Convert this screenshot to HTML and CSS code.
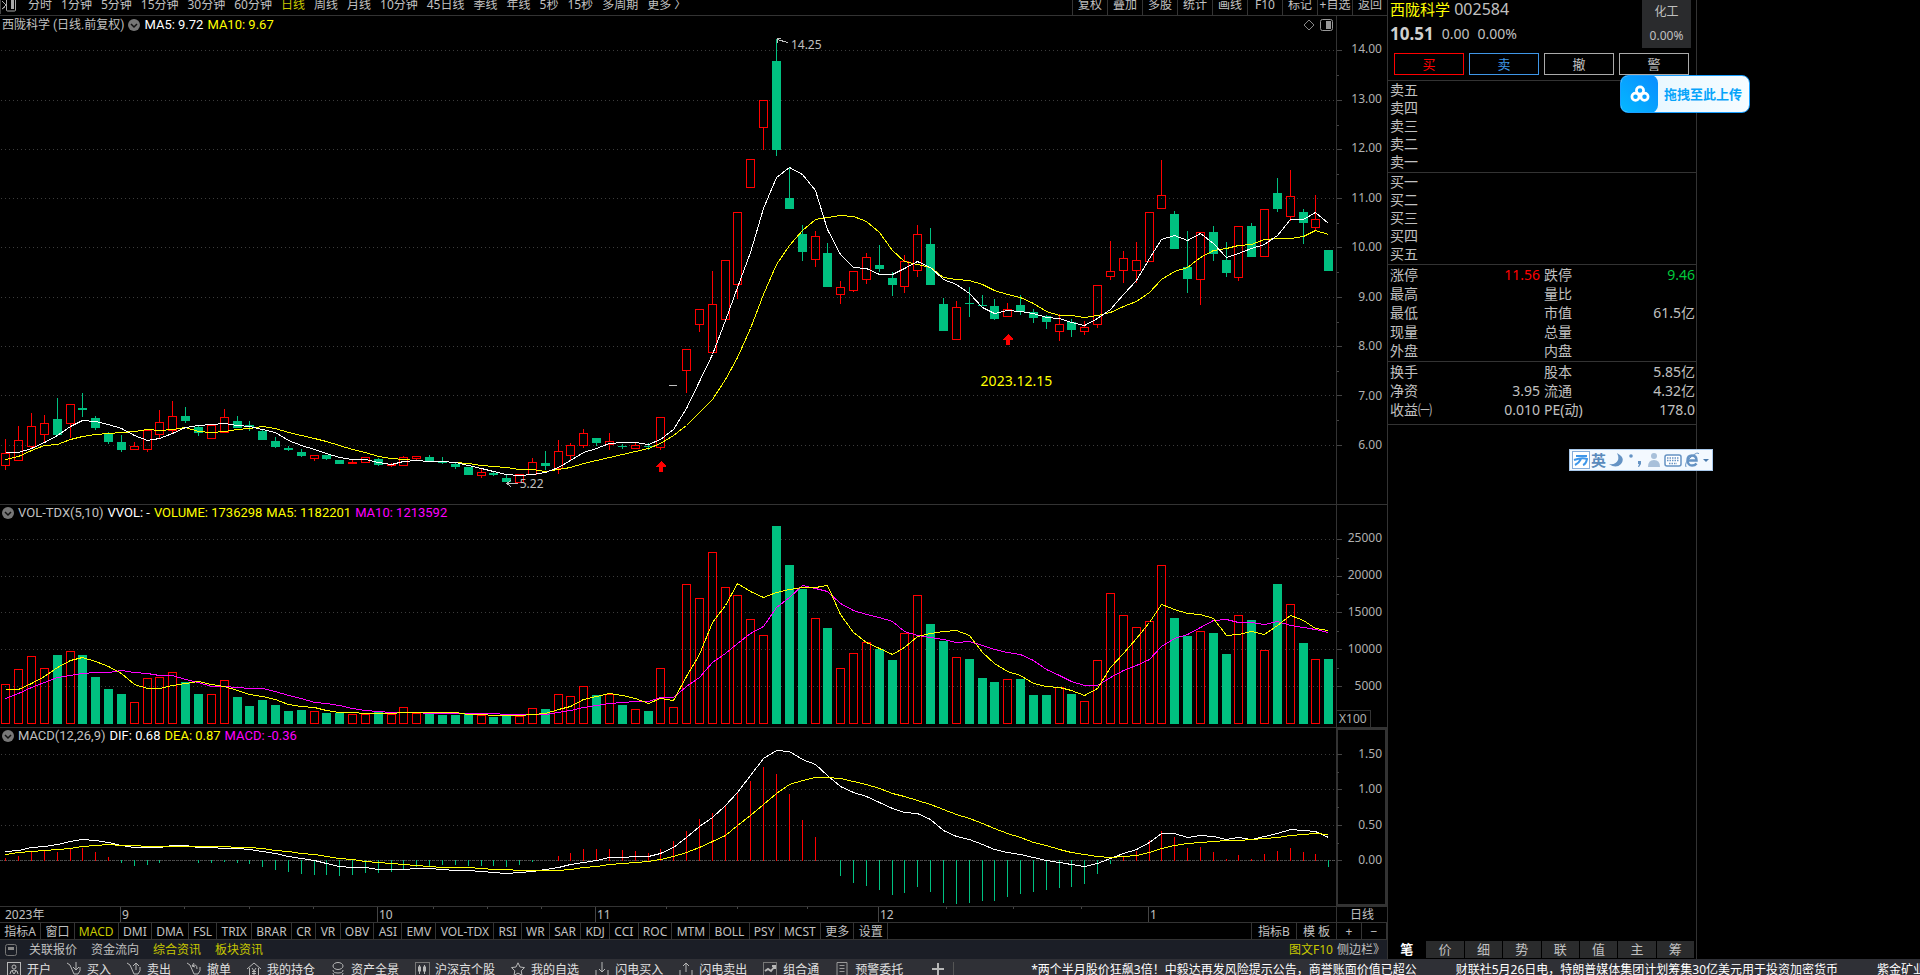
FILE: index.html
```html
<!DOCTYPE html>
<html lang="zh-CN">
<head>
<meta charset="utf-8">
<title>西陇科学 002584</title>
<link rel="stylesheet" href="styles.css">
</head>
<body>
<div class="app">
  <div class="workspace">
    <main class="chart-area">
      <nav class="topbar">
        <svg class="topbar-icon" viewBox="0 0 18 14"><path d="M0.5 0v14" stroke="#444"/><path d="M2 1l4 4-4 4M2 9l3-2" fill="none" stroke="#aaa"/><rect x="6.500" y="-3" width="9" height="14" rx="1" fill="none" stroke="#aaa"/><rect x="11" y="0" width="3" height="9" fill="#aaa"/></svg>
        <div class="periods">
          <button>分时</button><button>1分钟</button><button>5分钟</button><button>15分钟</button><button>30分钟</button><button>60分钟</button><button class="active">日线</button><button>周线</button><button>月线</button><button>10分钟</button><button>45日线</button><button>季线</button><button>年线</button><button>5秒</button><button>15秒</button><button>多周期</button><button>更多 〉</button>
        </div>
        <div class="tools">
          <button>复权</button><button>叠加</button><button>多股</button><button>统计</button><button>画线</button><button>F10</button><button>标记</button><button>+自选</button><button>返回</button>
        </div>
      </nav>

      <section class="panel panel-price">
        <div class="plot">
          <svg id="price" class="canvas" viewBox="0 16 1336 488" preserveAspectRatio="none"></svg>
          <div class="legend">
            <span class="legend-title">西陇科学 (日线.前复权)</span>
            <svg class="chevron" viewBox="0 0 12 12"><circle cx="6" cy="6" r="6" fill="#777"/><path d="M3 5l3 3 3-3" fill="none" stroke="#111" stroke-width="1.500"/></svg>
            <span class="white">MA5: 9.72</span><span class="yellow">MA10: 9.67</span>
            <svg class="corner-icons" viewBox="0 0 32 14"><path d="M2 7l5-5 5 5-5 5z" fill="none" stroke="#888"/><rect x="18.500" y="1.500" width="12" height="11" rx="2" fill="none" stroke="#999"/><rect x="24" y="3" width="5" height="8" fill="#999"/></svg>
          </div>
          <span class="note note-high">14.25</span>
          <span class="note note-low">5.22</span>
          <span class="note note-date">2023.12.15</span>
        </div>
        <div class="axis axis-price"><span>14.00</span><span>13.00</span><span>12.00</span><span>11.00</span><span>10.00</span><span>9.00</span><span>8.00</span><span>7.00</span><span>6.00</span></div>
      </section>

      <section class="panel panel-volume">
        <div class="plot">
          <svg id="volume" class="canvas" viewBox="0 505 1336 222" preserveAspectRatio="none"></svg>
          <div class="legend legend-sub">
            <svg class="chevron" viewBox="0 0 12 12"><circle cx="6" cy="6" r="6" fill="#777"/><path d="M3 5l3 3 3-3" fill="none" stroke="#111" stroke-width="1.500"/></svg>
            <span>VOL-TDX(5,10)</span><span class="white">VVOL: -</span><span class="yellow">VOLUME: 1736298</span><span class="yellow">MA5: 1182201</span><span class="magenta">MA10: 1213592</span>
          </div>
        </div>
        <div class="axis axis-volume"><div class="scale"><span>25000</span><span>20000</span><span>15000</span><span>10000</span><span>5000</span></div><span class="unit">X100</span></div>
      </section>

      <section class="panel panel-macd">
        <div class="plot">
          <svg id="macd" class="canvas" viewBox="0 728 1336 178" preserveAspectRatio="none"></svg>
          <div class="legend legend-sub">
            <svg class="chevron" viewBox="0 0 12 12"><circle cx="6" cy="6" r="6" fill="#777"/><path d="M3 5l3 3 3-3" fill="none" stroke="#111" stroke-width="1.500"/></svg>
            <span>MACD(12,26,9)</span><span class="white">DIF: 0.68</span><span class="yellow">DEA: 0.87</span><span class="magenta">MACD: -0.36</span>
          </div>
        </div>
        <div class="axis axis-macd"><span>1.50</span><span>1.00</span><span>0.50</span><span>0.00</span></div>
      </section>

      <div class="timeline">
        <div class="months">
          <svg id="ticks" class="canvas" viewBox="0 0 1336 15" preserveAspectRatio="none"></svg>
          <div class="month-row"><span>2023年</span><span>9</span><span>10</span><span>11</span><span>12</span><span>1</span></div>
        </div>
        <span class="cycle">日线</span>
      </div>

      <nav class="indicators">
        <div class="indicator-list"><button>指标A</button><button>窗口</button><button class="active">MACD</button><button>DMI</button><button>DMA</button><button>FSL</button><button>TRIX</button><button>BRAR</button><button>CR</button><button>VR</button><button>OBV</button><button>ASI</button><button>EMV</button><button>VOL-TDX</button><button>RSI</button><button>WR</button><button>SAR</button><button>KDJ</button><button>CCI</button><button>ROC</button><button>MTM</button><button>BOLL</button><button>PSY</button><button>MCST</button><button>更多</button><button>设置</button></div>
        <div class="templates"><button>指标B</button><button>模 板</button><button class="zoom">+</button><button class="zoom">−</button></div>
      </nav>

      <nav class="infobar">
        <svg class="info-icon" viewBox="0 0 12 13"><rect x="0.500" y="1.500" width="11" height="11" rx="2" fill="none" stroke="#777"/><rect x="3" y="4" width="6" height="3" fill="#888"/></svg>
        <button>关联报价</button><button>资金流向</button><button class="active">综合资讯</button><button class="active">板块资讯</button>
        <div class="info-right"><button class="active">图文F10</button><button>侧边栏》</button></div>
      </nav>
    </main>

    <aside class="quote">
      <header class="quote-head">
        <div>
          <h1 class="stock"><span class="stock-name">西陇科学</span> 002584</h1>
          <p class="last"><b>10.51</b><span>0.00</span><span>0.00%</span></p>
        </div>
        <div class="sector"><span>化工</span><span>0.00%</span></div>
      </header>
      <div class="orders"><button class="buy">买</button><button class="sell">卖</button><button>撤</button><button>警</button></div>
      <table class="depth"><tbody>
        <tr><th scope="row">卖五</th><td></td></tr><tr><th scope="row">卖四</th><td></td></tr><tr><th scope="row">卖三</th><td></td></tr><tr><th scope="row">卖二</th><td></td></tr><tr><th scope="row">卖一</th><td></td></tr>
      </tbody></table>
      <table class="depth"><tbody>
        <tr><th scope="row">买一</th><td></td></tr><tr><th scope="row">买二</th><td></td></tr><tr><th scope="row">买三</th><td></td></tr><tr><th scope="row">买四</th><td></td></tr><tr><th scope="row">买五</th><td></td></tr>
      </tbody></table>
      <dl class="stats">
        <div><dt>涨停</dt><dd class="up">11.56</dd></div><div><dt>跌停</dt><dd class="down">9.46</dd></div>
        <div><dt>最高</dt><dd></dd></div><div><dt>量比</dt><dd></dd></div>
        <div><dt>最低</dt><dd></dd></div><div><dt>市值</dt><dd>61.5亿</dd></div>
        <div><dt>现量</dt><dd></dd></div><div><dt>总量</dt><dd></dd></div>
        <div><dt>外盘</dt><dd></dd></div><div><dt>内盘</dt><dd></dd></div>
      </dl>
      <dl class="stats stats-last">
        <div><dt>换手</dt><dd></dd></div><div><dt>股本</dt><dd>5.85亿</dd></div>
        <div><dt>净资</dt><dd>3.95</dd></div><div><dt>流通</dt><dd>4.32亿</dd></div>
        <div><dt>收益㈠</dt><dd>0.010</dd></div><div><dt>PE(动)</dt><dd>178.0</dd></div>
      </dl>
      <nav class="side-tabs"><button class="current">笔</button><button>价</button><button>细</button><button>势</button><button>联</button><button>值</button><button>主</button><button>筹</button></nav>
    </aside>
  </div>

  <footer class="footer">
    <button><svg viewBox="0 0 14 14"><rect x=".5" y=".5" width="13" height="16" fill="none"/><circle cx="7" cy="5" r="2"/><path d="M3 12q0-4 4-4t4 4M5 9l2 3 2-3"/></svg>开户</button>
    <button><svg viewBox="0 0 14 14"><path d="M0 1l3 2 4 9h4q3-3 2-7M9 0v7M6 5l3 3 3-3"/></svg>买入</button>
    <button><svg viewBox="0 0 14 14"><path d="M0 1l3 2 4 9h4q3-3 2-7M9 8V1M6 4l3-3 3 3"/></svg>卖出</button>
    <button><svg viewBox="0 0 14 14"><path d="M0 1l3 2 4 9h4q3-3 2-7M7 1l-2 3 3 1M5 4q5-3 5 3"/></svg>撤单</button>
    <button><svg viewBox="0 0 14 14"><path d="M0 7l7-6 7 6M2.500 6v8h9V6M5 6l2 3 2-3M7 9v4M5 9.500h4M5 11.500h4"/></svg>我的持仓</button>
    <button><svg viewBox="0 0 14 14"><ellipse cx="7" cy="4" rx="5" ry="3.500"/><path d="M2 8q0 3 5 3t5-3M2 11q0 3 5 3t5-3"/></svg>资产全景</button>
    <button><svg viewBox="0 0 14 14"><rect x=".5" y=".5" width="14" height="16" stroke="#777"/><path d="M4.500 3v9M9.500 3v9"/><rect x="3.500" y="5" width="2" height="4"/><rect x="8.500" y="5" width="2" height="4"/></svg>沪深京个股</button>
    <button><svg viewBox="0 0 14 14"><path d="M7 .8l2 4.200 4.500.6-3.300 3.200.8 4.500-4-2.200-4 2.200.8-4.500L.5 5.600 5 5z"/></svg>我的自选</button>
    <button><svg viewBox="0 0 14 14"><path d="M7 0v10M4 7l3 3 3-3M1 8v6M13 8v6"/></svg>闪电买入</button>
    <button><svg viewBox="0 0 14 14"><path d="M7 10V1M4 4l3-3 3 3M1 8v6M13 8v6"/></svg>闪电卖出</button>
    <button><svg viewBox="0 0 14 14"><rect x=".5" y=".5" width="13" height="13" stroke="#777"/><path d="M2 9l3-2 3 2 4-5M9 4h3v3" stroke-width="2"/></svg>组合通</button>
    <button><svg viewBox="0 0 14 14"><path d="M2 14V.5h10V14M4.500 3.500h5M4.500 6.500h5M4.500 9.500h5" stroke="#999"/></svg>预警委托</button>
    <button class="add" aria-label="添加"><svg viewBox="0 0 14 14"><path d="M1 7h12M7 1v12" stroke-width="2"/></svg></button>
    <div class="ticker"><a href="#">*两个半月股价狂飙3倍！中毅达再发风险提示公告，商誉账面价值已超公</a><a href="#">财联社5月26日电，特朗普媒体集团计划筹集30亿美元用于投资加密货币</a><a href="#">紫金矿业</a></div>
  </footer>
</div>

<button class="upload"><span class="upload-logo"><svg viewBox="0 0 22 20"><g fill="none" stroke="#fff" stroke-width="3"><circle cx="11" cy="6" r="4"/><circle cx="6" cy="13" r="4"/><circle cx="16" cy="13" r="4"/></g></svg></span><span class="upload-text">拖拽至此上传</span></button>

<div class="ime">
  <svg viewBox="0 0 18 18"><rect x=".5" y=".5" width="17" height="17" fill="#fff" stroke="#86aedb"/><path d="M4 5h11M2 9q8-3 13-1-1 5-4 6M9 8q-2 4-6 6" fill="none" stroke="#3f97ea" stroke-width="2"/></svg>
  <span class="ime-lang">英</span>
  <svg viewBox="0 0 18 18"><path d="M10 2q9 5 4 11-5 5-12 0 7 1 9-4 1-3-1-7z" fill="#6593c4"/></svg>
  <svg viewBox="0 0 18 18"><circle cx="5" cy="5" r="1.800" fill="#6593c4"/><path d="M12 10h3v3l-2 3h-1l1-3h-1z" fill="#6593c4"/></svg>
  <svg viewBox="0 0 18 18"><circle cx="9" cy="5" r="3" fill="#a8c0da"/><path d="M3 16q0-7 6-7t6 7z" fill="#a8c0da"/></svg>
  <svg viewBox="0 0 18 18"><rect x="1" y="4" width="16" height="11" rx="2" fill="#fff" stroke="#6593c4" stroke-width="1.500"/><path d="M3 7h12M3 9.500h12M5 12.500h8" stroke="#6593c4" stroke-width="1.500" stroke-dasharray="1.500 1"/></svg>
  <svg viewBox="0 0 18 18"><path d="M4.500 9.500h9q0-5-4.500-5t-4.500 5q.5 5 4.500 5 3 0 4.500-2" fill="none" stroke="#6593c4" stroke-width="2.500"/><path d="M3 16Q1 12 8 6t8-3" fill="none" stroke="#6593c4"/></svg>
  <svg class="ime-more" viewBox="0 0 8 18"><path d="M1 8h6l-3 3z" fill="#4c7cae"/></svg>
</div>
<script src="chart.js"></script>
</body>
</html>
```
FILE: styles.css
```css
* { box-sizing: border-box; }
body {
  margin: 0;
  background: #000;
  color: #c0c0c0;
  font: 12px/16px "Noto Sans", "Noto Sans CJK SC", sans-serif;
}
button {
  margin: 0; padding: 0; border: 0; background: none;
  color: inherit; font: inherit; white-space: nowrap;
}
h1, p, dl, dd { margin: 0; font-weight: normal; }
svg { display: block; }

.app { display: flex; flex-direction: column; height: 100vh; overflow: hidden; }
.workspace {
  flex: 1 1 0; min-height: 0;
  display: grid; grid-template-columns: minmax(0, 1fr) 310px 223px;
}
.chart-area { display: flex; flex-direction: column; min-width: 0; min-height: 0; }
.white { color: #fff; }
.yellow { color: #ff0; }
.magenta { color: #f0f; }
.active { color: #c8c800; }

.topbar {
  flex: none; display: flex; align-items: flex-start; height: 16px;
  border-bottom: 1px solid #333; overflow: hidden;
}
.topbar button { line-height: 10px; }
.topbar-icon { width: 18px; height: 14px; margin-right: 10px; }
.periods { display: flex; gap: 9px; }
.tools { display: flex; margin-left: auto; }
.tools button { width: 35px; height: 15px; padding-bottom: 5px; border-left: 1px solid #333; }

.panel {
  display: grid; grid-template-columns: minmax(0, 1fr) 51px;
  min-height: 0; border-bottom: 1px solid #333;
}
.panel-price { flex: 488 1 0; }
.panel-volume { flex: 222 1 0; }
.panel-macd { flex: 178 1 0; }
.plot, .months { position: relative; display: grid; grid-template: minmax(0, 1fr) / minmax(0, 1fr); min-height: 0; }
.plot > *, .months > * { grid-area: 1 / 1; }
.canvas { width: 100%; height: 100%; overflow: visible; shape-rendering: crispEdges; }
.legend {
  align-self: start; display: flex; align-items: center; gap: 4px;
  height: 18px; padding-left: 2px; white-space: nowrap;
  font: 13px/16px Roboto, "Noto Sans CJK SC", sans-serif;
}
.legend-sub { height: 16px; }
.legend-title { font-size: 12px; }
.chevron { width: 12px; height: 12px; flex: none; }
.corner-icons { width: 32px; height: 14px; margin-left: auto; margin-right: 2px; }

.note { position: absolute; color: #c0c0c0; }
.note-high { left: 59.200%; top: 21px; }
.note-low { left: 38.900%; top: 460px; }
.note-date { left: 73.400%; top: 356px; color: #ff0; font-size: 14px; line-height: 18px; }

.axis, .scale {
  display: flex; flex-direction: column; justify-content: space-between; align-items: flex-end;
  min-height: 0; color: #b0b0b0;
}
.axis { padding-right: 5px; border-left: 1px solid #333; }
.axis-price { padding-top: 25px; padding-bottom: 51px; }
.axis-volume { padding-top: 25px; }
.scale { flex: 1 1 0; padding-bottom: 16px; }
.unit {
  align-self: flex-start; width: 34px; height: 17px; padding-left: 2px;
  border: solid #333; border-width: 1px 1px 0 0; line-height: 15px;
}
.axis-macd { padding: 16px 3px 36px 0; border: 2px solid #333; }

.timeline { flex: none; display: grid; grid-template-columns: minmax(0, 1fr) 51px; height: 16px; border-bottom: 1px solid #333; line-height: 15px; }
.month-row { display: grid; grid-template-columns: 120fr 257fr 218fr 283fr 270fr 188fr; }
.month-row span { padding-left: 1px; border-left: 1px solid #444; }
.month-row span:first-child { padding-left: 5px; border-left: 0; }
.cycle { border-left: 1px solid #333; text-align: center; }

.indicators { flex: none; display: flex; height: 17px; border-bottom: 1px solid #333; }
.indicators button { padding: 0 4px; border-right: 1px solid #333; line-height: 17px; }
.indicator-list { display: flex; width: 64%; }
.indicator-list button { flex: 1 0 auto; }
.templates { display: flex; margin-left: auto; border-left: 1px solid #333; }
.templates button { padding: 0 6px; }
.templates .zoom { width: 25px; padding: 0; }

.infobar { flex: none; display: flex; align-items: center; gap: 14px; height: 19px; padding: 0 2px 0 5px; background: #1b1e26; }
.info-icon { width: 12px; height: 13px; margin-right: -2px; }
.info-right { display: flex; gap: 4px; margin-left: auto; }

.quote { display: flex; flex-direction: column; border: solid #333; border-width: 0 1px; min-height: 0; }
.quote-head { display: flex; justify-content: space-between; height: 48px; padding: 0 5px 0 2px; }
.stock { font-size: 16px; line-height: 18px; }
.stock-name { color: #ff0; font-size: 15px; }
.last { display: flex; align-items: center; gap: 8px; font-size: 14px; line-height: 20px; margin-top: 6px; }
.last b { font-size: 17px; color: #d0d0d0; }
.sector { width: 49px; background: #2a2b2d; text-align: center; display: grid; line-height: 24px; }
.orders { display: grid; grid-template-columns: repeat(4, 1fr); gap: 5px; padding: 5px 7px 5px 6px; border-bottom: 1px solid #333; }
.orders button { height: 22px; border: 1px solid #aaa; font-size: 13px; line-height: 18px; }
.orders .buy { color: #f00; border-color: #f00; }
.orders .sell { color: #3f97e8; border-color: #3f97e8; }
.depth { width: 100%; border-spacing: 0; padding: 0 0 1px 2px; border-bottom: 1px solid #333; font-size: 14px; }
.depth th { padding: 0; font-weight: normal; text-align: left; line-height: 18px; height: 18px; }
.depth td { padding: 0; }
.stats {
  display: grid; grid-template-columns: 150px minmax(0, 1fr); column-gap: 4px;
  padding: 0 1px 1px 2px; border-bottom: 1px solid #333; font-size: 14px; line-height: 19px;
}
.stats div { display: flex; justify-content: space-between; }
.stats-last { padding-bottom: 5px; }
.up { color: #f00; }
.down { color: #00c83c; }
.side-tabs { display: grid; grid-template-columns: repeat(8, 1fr); gap: 1px; margin-top: auto; padding: 0 2px 1px 0; }
.side-tabs button { height: 17px; background: #2a2b2c; font-size: 13px; line-height: 15px; }
.side-tabs .current { background: none; color: #fff; font-weight: bold; }

.footer { flex: none; display: flex; gap: 16px; height: 16px; padding: 3px 0 0 7px; background: #2f3036; color: #e0e0e0; overflow: hidden; }
.footer button { flex: none; display: flex; gap: 6px; height: 16px; }
.footer svg { width: 14px; height: 14px; overflow: visible; fill: none; stroke: #b8b8b8; }
.footer .add { margin-left: 12px; }
.ticker { flex: 1 1 0; display: flex; gap: 39px; min-width: 0; margin-left: -8px; padding-left: 77px; border-left: 1px solid #555; white-space: nowrap; overflow: hidden; color: #fff; }
.ticker a { color: inherit; text-decoration: none; }

.upload {
  position: absolute; top: 75px; right: 170px; display: flex; width: 130px; height: 38px;
  border: 1px solid #1a9fff; border-radius: 8px; background: linear-gradient(90deg, #e4f6ff, #f6fcff);
  overflow: hidden; color: #06a4fa; font-size: 13px; font-weight: bold; align-items: center;
}
.upload-logo { display: grid; place-items: center; width: 37px; height: 38px; background: linear-gradient(45deg, #04b8ff, #0a8cff); border-radius: 0 8px 8px 0; }
.upload-logo svg { width: 20px; height: 18px; }
.upload-text { padding-left: 6px; }
.ime {
  position: absolute; top: 449px; right: 207px; display: flex; align-items: center; justify-content: space-between;
  width: 144px; height: 22px; padding: 0 2px; border: 1px solid #a8c8ea; background: #f3f9ff; color: #5a8abc;
}
.ime svg { width: 18px; height: 18px; }
.ime .ime-more { width: 8px; }
.ime-lang { font-size: 15px; font-weight: bold; line-height: 18px; }
```
FILE: chart.js
```js
// Candle: colour, high, body top, body bottom, low
const candles = `r439,453,465,470 r426,440,460,460 r413,426,446,448 r415,423,434,442 g398,419,435,435 r404,404,423,438 g393,408,410,417 g416,418,428,430 g432,433,442,444 g435,442,450,452
r442,446,449,449 r430,430,449,452 r410,422,434,438 r401,416,430,434 g407,416,421,423 g426,427,433,436 r425,425,438,438 r409,417,432,432 g416,421,428,428 g421,425,427,431
g430,431,440,440 g437,441,447,448 g446,448,450,451 g449,452,456,457 r455,455,458,461 g455,455,459,460 g460,460,464,464 r459,462,463,463 r457,457,462,462 g458,459,465,466
r463,464,465,467 r456,457,465,465 r456,456,458,460 g455,457,461,461 g457,461,463,464 g463,464,467,469 g467,467,475,475 r468,472,475,478 g472,473,475,476 g475,478,482,482
r474,474,482,482 r458,462,474,474 g451,463,466,470 r440,451,468,474 r443,445,455,460 r429,433,445,448 g438,438,443,446 r433,441,444,450 g444,446,447,449 r443,445,448,448
g443,446,447,450 r417,417,447,450 w385,385,386,386 r349,349,370,393 r309,309,324,332 r271,304,352,352 r260,260,319,319 r212,212,284,299 r159,159,187,187 r100,100,127,150
g39,61,150,156 g167,198,209,209 g225,234,252,261 r231,236,259,267 g243,253,287,287 r281,287,294,304 r271,271,290,292 r253,257,279,284 g245,265,269,272 g272,278,285,296
r255,261,286,293 r225,234,270,277 g228,244,285,285 g298,304,331,331 r301,307,339,339 g287,303,304,317 g295,305,306,306 g299,306,319,320 r303,309,316,316 g295,305,312,315
g309,312,318,323 g315,316,322,329 r314,324,331,341 g319,322,330,337 r321,327,331,335 r285,285,324,328 r241,271,276,280 r251,258,270,283 r242,260,270,283 r212,212,261,261
r160,195,208,208 g211,214,249,249 g231,267,279,293 r232,232,279,305 g226,232,254,261 g242,260,273,277 r226,226,277,281 g223,226,257,257 r209,209,256,256 g178,193,209,212
r170,196,216,221 g209,212,223,244 r195,219,227,230 g250,250,271,271`.split(/\s+/).map(s => [s[0], ...s.slice(1).split(",").map(Number)]);

const nums = s => s.trim().split(/\s+/).map(Number);
const ma5 = nums(`452 452 448 442 435 426 420 421 424 428 435 440 438 433 427 425 424 423 425 426 429 432 440 445 449 453 457 459 459 462 464 461 460 461 461 462 465 468 471 474 475 474 472 467 460 452 448 443 442 442 444 439 429 408 381 354 320 287 252 208 177 167 174 190 229 254 267 268 274 274 268 261 267 279 284 293 307 313 310 311 313 317 318 322 325 318 309 294 280 258 239 235 240 233 243 257 253 248 244 235 219 219 212 223`);
const ma10 = nums(`459 456 450 445 444 439 436 434 433 432 431 429 430 429 427 431 432 431 429 428 426 428 432 435 438 441 445 449 452 456 458 459 460 461 461 462 463 465 466 467 469 469 471 469 467 463 460 457 454 451 448 443 435 425 412 399 379 357 328 294 264 245 230 219 217 215 216 221 232 250 261 264 267 277 279 280 284 290 294 297 303 311 315 315 317 315 312 306 301 292 279 271 267 257 250 248 245 244 239 238 238 236 230 234`);
const vol = nums(`684 669 656 668 655 651 655 677 689 694 702 678 677 672 682 694 694 680 697 706 700 705 711 710 711 713 713 714 714 712 714 707 713 713 715 715 714 715 717 716 716 708 709 694 696 686 695 694 705 709 711 668 707 584 598 552 587 595 619 635 526 565 589 618 628 668 653 642 649 660 633 595 624 641 657 659 678 682 679 679 695 695 687 694 701 660 593 615 627 621 565 618 636 631 633 654 615 620 650 584 604 643 659 659`);
const vma5 = nums(`689 689 683 676 667 660 657 661 666 673 684 688 688 685 683 681 684 686 690 694 696 699 704 706 707 710 712 712 713 713 713 712 712 712 712 712 714 714 715 715 715 714 713 709 706 699 696 693 695 698 703 698 700 676 654 622 605 583 591 597 592 589 587 587 585 614 632 642 648 654 647 636 633 631 630 635 652 663 671 675 683 686 687 690 695 688 667 653 638 622 604 609 613 614 618 635 634 631 634 625 615 620 628 630`);
const vma10 = nums(`698 693 687 682 677 675 673 672 672 670 672 673 675 675 679 682 686 686 687 688 688 691 695 698 702 703 705 708 710 711 712 712 712 713 713 713 713 713 713 714 714 714 714 712 710 707 705 703 702 701 701 697 697 686 677 662 653 643 633 626 607 597 585 588 591 603 610 614 617 621 631 635 637 639 642 641 645 649 652 654 660 669 675 681 685 685 677 670 665 659 646 638 634 627 620 619 622 622 624 621 625 627 629 632`);
const hist = nums(`858 856 852 850 852 848 848 852 857 862 865 864 862 860 860 862 862 861 862 863 866 869 871 873 874 874 875 874 872 872 871 868 866 865 864 864 865 865 865 866 864 861 860 856 853 849 849 849 850 851 853 849 841 831 819 813 805 793 781 767 774 794 820 837 860 875 882 885 889 894 892 886 891 902 903 902 900 900 896 893 891 889 887 886 883 873 863 856 851 840 831 837 848 847 852 859 855 859 854 851 848 852 854 866`);
const dif = nums(`851 850 847 846 844 841 839 840 842 845 847 847 847 845 845 847 847 848 848 849 851 853 856 858 860 863 866 867 867 869 869 869 868 868 869 870 870 871 872 873 872 871 869 867 864 862 860 857 857 856 856 853 847 837 826 817 805 792 775 758 750 751 759 764 775 786 792 796 802 808 812 813 819 830 836 839 844 849 852 854 857 860 862 864 866 863 858 853 849 842 833 833 837 835 836 839 837 839 836 833 829 830 831 837`);
const dea = nums(`854 852 851 850 849 848 846 845 844 845 845 846 846 846 846 846 846 846 847 847 848 850 851 853 854 856 858 859 861 862 863 864 865 866 867 867 867 868 869 869 870 870 870 870 869 867 866 864 863 862 861 859 856 852 847 841 835 825 815 804 793 784 780 777 777 778 781 784 788 793 796 800 804 809 814 818 823 828 833 837 842 845 849 852 854 856 857 856 855 852 848 845 843 842 841 840 840 839 838 837 835 834 833 834`);

const RED = "#ff0000", GREEN = "#00c080", AXIS = "#444";
const cx = i => Math.floor(5.8 + i * 12.845);
const rect = (x, y, w, h, fill) => `<rect x="${x}" y="${y}" width="${w}" height="${h}" fill="${fill}"/>`;
const box = (x, y, w, h) => `<rect x="${x + 0.5}" y="${y + 0.5}" width="${w}" height="${h}" fill="none" stroke="${RED}"/>`;
const line = (ys, c) => `<polyline fill="none" stroke="${c}" points="${ys.map((y, i) => (cx(i) + 0.5) + "," + (y + 0.5)).join(" ")}"/>`;

// Dotted grid rows, long ticks on them and short ticks half way between.
function grid(rows, tail) {
  let out = "";
  rows.forEach((y, i) => {
    out += `<path d="M1 ${y + 0.5}H1336" stroke="#3c3c3c" stroke-dasharray="1 3"/>` + rect(1337, y, 5, 1, AXIS);
    const next = i + 1 < rows.length ? rows[i + 1] : tail;
    if (next) out += rect(1337, Math.round((y + next) / 2), 2, 1, AXIS);
  });
  return out;
}

let price = grid([50, 100, 149, 198, 247, 297, 346, 395, 445]);
candles.forEach(([k, hi, top, bot, lo], i) => {
  const x = cx(i);
  if (k === "w") { price += rect(x - 4, top, 8, 1, "#c0c0c0"); return; }
  const color = k === "r" ? RED : GREEN;
  if (top > hi) price += rect(x, hi, 1, top - hi, color);
  if (lo > bot) price += rect(x, bot, 1, lo - bot, color);
  price += k === "r" ? box(x - 4, top, 8, Math.max(1, bot - top)) : rect(x - 4, top, 9, bot - top, color);
});
price += line(ma10, "#ffff00") + line(ma5, "#ffffff");
[[661, 461], [1008, 334]].forEach(([x, y]) => {
  price += `<path d="M${x} ${y}l5 5v1h-3v5h-4v-5h-3v-1z" fill="${RED}"/>`;
});
price += `<path d="M788 42.500L777 39.500M777.500 43V38.500H781M518 483.500H507M511 480l-4 3.500 4 3.500" fill="none" stroke="#c0c0c0"/>`;
document.getElementById("price").innerHTML = price;

let volume = grid([539, 576, 612, 649, 686]);
vol.forEach((y, i) => {
  volume += candles[i][0] === "g" ? rect(cx(i) - 4, y, 9, 724 - y, GREEN) : box(cx(i) - 4, y, 8, 723 - y);
});
document.getElementById("volume").innerHTML = volume + line(vma10, "#ff00ff") + line(vma5, "#ffff00");

let macd = grid([754, 789, 825, 860]) + `<path d="M0 860.5H1336" stroke="#555" stroke-dasharray="1 1"/>`;
hist.forEach((y, i) => {
  if (y < 860) macd += rect(cx(i), y, 1, 861 - y, RED);
  if (y > 860) macd += rect(cx(i), 860, 1, y - 860 + 1, GREEN);
});
document.getElementById("macd").innerHTML = macd + line(dif, "#ffffff") + line(dea, "#ffff00");

document.getElementById("ticks").innerHTML = [184, 249, 313, 433, 487, 541, 666, 737, 807, 946, 1013, 1081].map(x => rect(x, 0, 1, 2, AXIS)).join("");
```
